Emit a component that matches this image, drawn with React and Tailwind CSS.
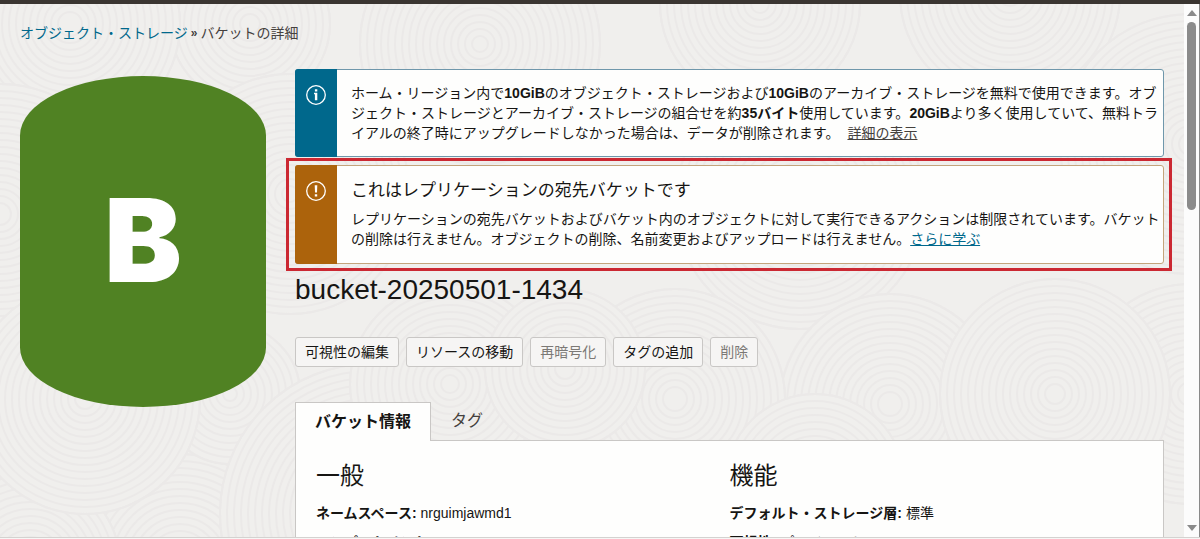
const rings = [
  { x: 480, y: 40, r: 120 },
  { x: 250, y: 20, r: 80 },
  { x: 70, y: 20, r: 110 },
  { x: 1010, y: -10, r: 110 },
  { x: 760, y: 0, r: 100 },
  { x: 1190, y: 140, r: 130 },
  { x: 290, y: 190, r: 120 },
  { x: 0, y: 210, r: 130 },
  { x: 180, y: 560, r: 110 },
  { x: 30, y: 560, r: 90 },
  { x: 230, y: 390, r: 70 },
  { x: 85, y: 395, r: 115 },
  { x: 370, y: 510, r: 150 },
  { x: 450, y: 380, r: 100 },
  { x: 800, y: 200, r: 125 },
  { x: 890, y: 400, r: 110 },
  { x: 1190, y: 390, r: 110 },
  { x: 675, y: 395, r: 110 },
  { x: 565, y: 365, r: 80 },
  { x: 815, y: 480, r: 90 },
  { x: 1055, y: 390, r: 115 },
];

const actions = [
  { label: "可視性の編集" },
  { label: "リソースの移動" },
  { label: "再暗号化", disabled: true },
  { label: "タグの追加" },
  { label: "削除", disabled: true },
];

const sections = [
  {
    title: "一般",
    rows: [
      { label: "ネームスペース:", value: "nrguimjawmd1" },
      { label: "コンパートメント:", value: "" },
    ],
  },
  {
    title: "機能",
    rows: [
      { label: "デフォルト・ストレージ層:", value: "標準" },
      { label: "可視性:", value: "プライベート" },
    ],
  },
];

function RingPattern() {
  return (
    <svg className="absolute inset-0 h-full w-full" aria-hidden="true">
      {rings.map((ring, i) => (
        <g key={i} fill="none" stroke="#ebe9e8" strokeWidth="2">
          <circle cx={ring.x} cy={ring.y} r={ring.r} fill="#f0efed" />
          {Array.from({ length: Math.floor(ring.r / 7) }, (_, n) => (
            <circle key={n} cx={ring.x} cy={ring.y} r={ring.r - n * 7} />
          ))}
        </g>
      ))}
    </svg>
  );
}

function InfoIcon() {
  return (
    <svg width="22" height="22" viewBox="0 0 22 22" fill="none" aria-hidden="true">
      <circle cx="11" cy="11" r="9.3" stroke="#fff" strokeWidth="1.3" />
      <path d="M9.9 5.2h2.4v2.2H9.9zM9 8.8h3.3v7.4H9.9v-6H9z" fill="#fff" />
    </svg>
  );
}

function WarningIcon() {
  return (
    <svg width="22" height="22" viewBox="0 0 22 22" fill="none" aria-hidden="true">
      <circle cx="11" cy="11" r="9.3" stroke="#fff" strokeWidth="1.3" />
      <path d="M9.7 5.2h2.6l-.3 7.3h-2zM9.8 14.2h2.4v2.3H9.8z" fill="#fff" />
    </svg>
  );
}

function InfoBanner() {
  return (
    <div className="flex rounded-[3px] border border-[#6f97ab] bg-[#fefefd]">
      <div className="-my-px -ml-px flex w-[42px] shrink-0 justify-center rounded-l-[3px] bg-[#00688c] pt-[15px]">
        <InfoIcon />
      </div>
      <p className="py-[13px] pl-[14px] text-sm leading-5">
        ホーム・リージョン内で<b>10GiB</b>のオブジェクト・ストレージおよび<b>10GiB</b>
        のアーカイブ・ストレージを無料で使用できます。オブジェクト・ストレージとアーカイブ・ストレージの組合せを約
        <b>35バイト</b>使用しています。<b>20GiB</b>
        より多く使用していて、無料トライアルの終了時にアップグレードしなかった場合は、データが削除されます。
        <a href="#details" className="ml-2 text-[#45413e] underline">詳細の表示</a>
      </p>
    </div>
  );
}

function WarningBanner() {
  return (
    <div className="relative mt-2">
      <div className="flex rounded-[3px] border border-[#c4a47c] bg-[#fefefd]">
        <div className="-my-px -ml-px flex w-[42px] shrink-0 justify-center rounded-l-[3px] bg-[#ac630c] pt-[15px]">
          <WarningIcon />
        </div>
        <div className="pt-[13px] pb-[14px] pl-[14px]">
          <h2 className="text-[17px] leading-6">これはレプリケーションの宛先バケットです</h2>
          <p className="mt-1.5 text-sm leading-5">
            レプリケーションの宛先バケットおよびバケット内のオブジェクトに対して実行できるアクションは制限されています。バケットの削除は行えません。オブジェクトの削除、名前変更およびアップロードは行えません。
            <a href="#learn" className="text-[#00688c] underline">さらに学ぶ</a>
          </p>
        </div>
      </div>
      <div className="pointer-events-none absolute -inset-y-[7px] -right-2 -left-[9px] border-3 border-[#cb2832]" />
    </div>
  );
}

function Tabs() {
  return (
    <div role="tablist" className="relative z-10 -mb-px mt-[35px] flex">
      <button
        role="tab"
        aria-selected="true"
        className="h-[39px] border border-b-0 border-[#c9c7c5] bg-[#fefefd] px-[19px] text-base font-bold"
      >
        バケット情報
      </button>
      <button role="tab" aria-selected="false" className="h-[38px] px-5 text-base text-[#45413e]">
        タグ
      </button>
    </div>
  );
}

function Scrollbar() {
  return (
    <div className="flex w-4 shrink-0 flex-col items-center border-r border-[#8a8a8a] bg-[#fcfcfc] py-1.5">
      <svg width="10" height="6" viewBox="0 0 10 6" aria-hidden="true">
        <path d="M5 0l5 6H0z" fill="#8a8a8a" />
      </svg>
      <div className="mt-1.5 h-[36%] w-[9px] rounded-full bg-[#8b8b8b]" />
      <svg className="mt-auto" width="10" height="6" viewBox="0 0 10 6" aria-hidden="true">
        <path d="M5 6L0 0h10z" fill="#8a8a8a" />
      </svg>
    </div>
  );
}

export default function App() {
  return (
    <div className="flex h-screen flex-col overflow-hidden bg-[#f0efed] font-['Liberation_Sans','Noto_Sans_CJK_JP',sans-serif] text-[#161513]">
      <div className="h-1 shrink-0 bg-[#3a3531]" />
      <div className="flex min-h-0 flex-1">
        <main className="relative flex-1 overflow-hidden">
          <RingPattern />
          <div className="relative px-5 pt-[19px]">
            <nav className="flex gap-[3px] text-sm leading-5 text-[#45413e]">
              <a href="#storage" className="text-[#00688c]">オブジェクト・ストレージ</a>
              <span className="text-xs leading-5 font-bold">»</span>
              <span>バケットの詳細</span>
            </nav>

            <div className="mt-[26px] flex gap-[29px]">
              <div className="mt-[7px] flex h-[331px] w-[246px] shrink-0 items-center justify-center rounded-[50%/18%] bg-[#508223] pb-1 font-['Inter',sans-serif] text-[116px] leading-none font-black text-white">
                B
              </div>

              <div className="min-w-0 flex-1">
                <InfoBanner />
                <WarningBanner />

                <h1 className="mt-[10px] text-[28px] leading-8">bucket-20250501-1434</h1>

                <div className="mt-[31px] flex gap-[7px]">
                  {actions.map((action) => (
                    <button
                      key={action.label}
                      disabled={action.disabled}
                      className="h-[30px] rounded-[3px] border border-[#c9c7c5] bg-[#f6f5f4] px-[9px] text-sm disabled:text-[#7c7976]"
                    >
                      {action.label}
                    </button>
                  ))}
                </div>

                <Tabs />
                <div className="grid grid-cols-2 border border-[#c9c7c5] bg-[#fefefd] px-5 pt-[17px] pb-4">
                  {sections.map((section) => (
                    <section key={section.title}>
                      <h2 className="text-2xl leading-9">{section.title}</h2>
                      <dl className="mt-[9px] text-sm leading-5">
                        {section.rows.map((row) => (
                          <div key={row.label} className="mb-[9px] flex gap-1">
                            <dt className="font-bold">{row.label}</dt>
                            <dd>{row.value}</dd>
                          </div>
                        ))}
                      </dl>
                    </section>
                  ))}
                </div>
              </div>
            </div>
          </div>
        </main>
        <Scrollbar />
      </div>
      <div className="h-0.5 shrink-0 border-t border-[#d4d2d0] bg-[#f7f6f5]" />
    </div>
  );
}
